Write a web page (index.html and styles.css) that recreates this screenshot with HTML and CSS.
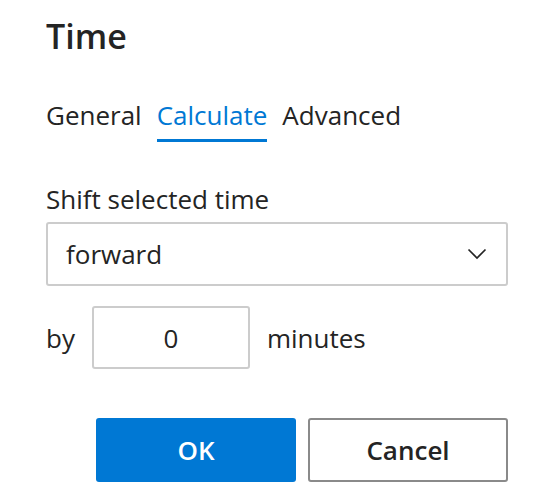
FILE: index.html
```html
<!DOCTYPE html>
<html>
<head>
<meta charset="utf-8">
<link rel="stylesheet" href="styles.css">
</head>
<body>
<div class="dialog">
  <h1 class="title">Time</h1>
  <div class="tabs">
    <div class="tab">General</div>
    <div class="tab active">Calculate</div>
    <div class="tab">Advanced</div>
  </div>
  <div class="label">Shift selected time</div>
  <div class="select">
    <span class="select-value">forward</span>
    <svg class="chevron" width="20" height="12" viewBox="0 0 20 12"><path d="M1.5 1.5 L10 10 L18.5 1.5" fill="none" stroke="#242424" stroke-width="1.7"/></svg>
  </div>
  <div class="row">
    <span class="text">by</span>
    <div class="num">0</div>
    <span class="text">minutes</span>
  </div>
  <div class="buttons">
    <div class="btn primary">OK</div>
    <div class="btn secondary">Cancel</div>
  </div>
</div>
</body>
</html>
```
FILE: styles.css
```css
html, body {
  margin: 0;
  padding: 0;
  background: #ffffff;
}
.dialog {
  padding: 16px 46px 0 46px;
  font-family: "Open Sans", "Noto Sans", sans-serif;
  color: #242424;
  display: flex;
  flex-direction: column;
}
.title {
  margin: 0;
  font-size: 34px;
  font-weight: 600;
  line-height: 40px;
  height: 40px;
}
.tabs {
  margin-top: 42px;
  display: flex;
  gap: 15px;
}
.tab {
  font-size: 26px;
  line-height: 34px;
  padding-bottom: 7px;
  border-bottom: 3px solid transparent;
}
.tab.active {
  color: #0078d4;
  border-bottom-color: #0078d4;
}
.label {
  margin-top: 40px;
  font-size: 26px;
  line-height: 34px;
}
.select {
  margin-top: 6px;
  box-sizing: border-box;
  height: 64px;
  border: 2px solid #cccccc;
  border-radius: 3px;
  display: flex;
  align-items: center;
  justify-content: space-between;
  padding: 0 19px 0 18px;
  font-size: 26px;
}
.chevron {
  display: block;
}
.row {
  margin-top: 20px;
  display: flex;
  align-items: center;
  gap: 17px;
  height: 63px;
}
.text {
  font-size: 26px;
}
.num {
  box-sizing: border-box;
  width: 158px;
  height: 63px;
  border: 2px solid #cccccc;
  border-radius: 3px;
  display: flex;
  align-items: center;
  justify-content: center;
  font-size: 26px;
}
.buttons {
  margin-top: 49px;
  display: flex;
  justify-content: flex-end;
  gap: 12px;
}
.btn {
  box-sizing: border-box;
  width: 200px;
  height: 64px;
  border-radius: 3px;
  display: flex;
  align-items: center;
  justify-content: center;
  font-size: 26px;
  font-weight: 600;
}
.btn.primary {
  background: #0078d4;
  color: #ffffff;
}
.btn.secondary {
  background: #ffffff;
  border: 2px solid #8a8a8a;
  color: #242424;
}
```
